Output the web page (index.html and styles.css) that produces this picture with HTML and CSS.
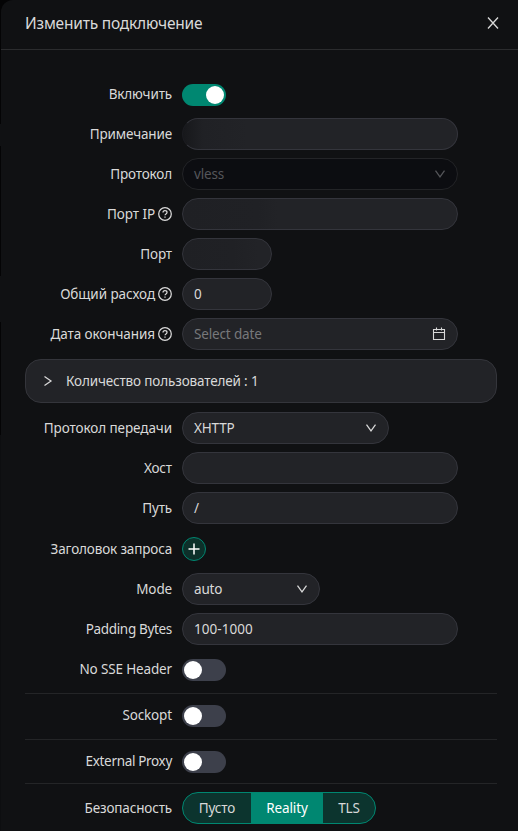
FILE: index.html
```html
<!DOCTYPE html>
<html lang="ru">
<head>
<meta charset="utf-8">
<title>Изменить подключение</title>
<link rel="stylesheet" href="styles.css">
</head>
<body>
<svg class="defs" width="0" height="0" aria-hidden="true">
  <symbol id="help" viewBox="0 0 14 14"><circle cx="7" cy="7" r="6.3"/><path d="M5 5.6C5 4.4 5.8 3.7 7 3.7s2 .7 2 1.8c0 1.5-2 1.4-2 2.8"/><path d="M7 9.5v1.2"/></symbol>
  <symbol id="down" viewBox="0 0 12 12"><path d="M1.5 2.7 6 8.9l4.500-6.200"/></symbol>
</svg>
<main class="modal">
  <header class="header">
    <h1 class="title">Изменить подключение</h1>
    <svg class="close" viewBox="0 0 12 12"><path d="M1 .5 11 11.500M11 .5 1 11.500"/></svg>
  </header>
  <div class="body">
    <div class="row"><label class="label">Включить</label><span class="switch on"></span></div>
    <div class="row"><label class="label">Примечание</label><div class="field hidden-note"></div></div>
    <div class="row"><label class="label">Протокол</label><div class="field disabled"><span>vless</span><svg class="arrow"><use href="#down"/></svg></div></div>
    <div class="row"><label class="label wide">Порт IP<svg class="help"><use href="#help"/></svg></label><div class="field hidden-ip"></div></div>
    <div class="row"><label class="label">Порт</label><div class="field short hidden-port"></div></div>
    <div class="row"><label class="label wide">Общий расход<svg class="help"><use href="#help"/></svg></label><div class="field short">0</div></div>
    <div class="row"><label class="label wide">Дата окончания<svg class="help"><use href="#help"/></svg></label><div class="field date"><span>Select date</span><svg class="calendar" viewBox="0 0 14 14"><path d="M1.500 2.500h11v10h-11zM1.500 5.500h11M4.500 .5v3M9.500 .5v3"/></svg></div></div>
    <div class="panel"><svg class="right" viewBox="0 0 12 12"><path d="m2.500 1.500 6.500 4.500-6.500 4.500"/></svg><span>Количество пользователей : 1</span></div>
    <div class="row"><label class="label wide">Протокол передачи</label><div class="field transport"><span>XHTTP</span><svg class="arrow"><use href="#down"/></svg></div></div>
    <div class="row"><label class="label">Хост</label><div class="field"></div></div>
    <div class="row"><label class="label">Путь</label><div class="field">/</div></div>
    <div class="row add-row"><label class="label">Заголовок запроса</label><span class="add"><svg viewBox="0 0 12 12"><path d="M6 .5v11M.5 6h11"/></svg></span></div>
    <div class="row"><label class="label">Mode</label><div class="field mode"><span>auto</span><svg class="arrow"><use href="#down"/></svg></div></div>
    <div class="row"><label class="label narrow">Padding Bytes</label><div class="field numbers">100-1000</div></div>
    <div class="row sse"><label class="label">No SSE Header</label><span class="switch"></span></div>
    <div class="row section"><label class="label">Sockopt</label><span class="switch"></span></div>
    <div class="row section proxy"><label class="label narrow">External Proxy</label><span class="switch"></span></div>
    <div class="row section security"><label class="label">Безопасность</label><div class="segments"><span class="none">Пусто</span><span class="reality">Reality</span><span class="tls">TLS</span></div></div>
  </div>
</main>
</body>
</html>
```
FILE: styles.css
```css
* { box-sizing: border-box; }
body {
  margin: 0;
  height: 831px;
  padding-left: 1px;
  overflow: hidden;
  background: linear-gradient(#040405 124px, #101113 124px 146px, #040405 146px 276px, #101113 276px 322px, #040405 322px 435px, #0d0e10 435px);
  color: #d9d9d9;
  font: 13.5px/20px "Noto Sans", "Open Sans", sans-serif;
  letter-spacing: -.15px;
}
svg { fill: none; stroke: currentColor; flex: none; }
.defs { position: absolute; }
.modal { height: 831px; background: #101113; border-top-left-radius: 12px; }
.header {
  height: 50px;
  padding: 0 19px 4px 24px;
  display: flex;
  align-items: center;
  justify-content: space-between;
  border-bottom: 1px solid #2b2c2e;
}
.title { margin: 0; font-size: 15.5px; line-height: 22px; font-weight: 400; letter-spacing: -.2px; }
.close { width: 12px; height: 12px; stroke-width: 1.3; }
.body { padding: 24px 21px 0 24px; }
.row { height: 40px; display: grid; grid-template-columns: 147px 1fr; column-gap: 10px; align-items: center; }
.label { display: flex; justify-content: flex-end; align-items: center; gap: 3px; white-space: nowrap; }
.wide { letter-spacing: -.08px; }
.narrow { letter-spacing: -.33px; }
.help { width: 14px; height: 14px; stroke-width: 1.25; }
.field {
  width: 276px;
  height: 32px;
  padding: 0 11px;
  display: flex;
  align-items: center;
  justify-content: space-between;
  background: #222327;
  border: 1px solid #34353c;
  border-radius: 16px;
}
.short { width: 90px; }
.transport { width: 207px; }
.mode { width: 138px; }
.numbers { letter-spacing: .05px; }
.disabled { background: #0c0d11; border-color: #232427; color: #55565a; }
.date span { color: #77787b; }
.arrow { width: 12px; height: 12px; stroke-width: 1.25; }
.calendar { width: 14px; height: 14px; stroke-width: 1.1; }
.hidden-note { background: linear-gradient(90deg, #17181b, #202125 20px, #222327 65px); border-left-color: #1b1c20; }
.hidden-ip { background: linear-gradient(90deg, #1f2024, #202125 75px, #222327 95px); }
.hidden-port { background: linear-gradient(90deg, #1f2024, #202125 50px, #222327 75px); }
.switch { width: 44px; height: 22px; padding: 2px; display: block; border-radius: 11px; background: #3d404b; margin-top: 2px; }
.switch::after { content: ""; display: block; width: 18px; height: 18px; border-radius: 50%; background: #fff; }
.switch.on { background: #008771; }
.switch.on::after { margin-left: auto; }
.panel {
  height: 44px;
  margin: 5px 0;
  padding: 0 16px;
  display: flex;
  align-items: center;
  gap: 12px;
  background: #222327;
  border: 1px solid #34353b;
  border-radius: 16px;
}
.right { width: 12px; height: 12px; stroke-width: 1.25; }
.add-row { height: 41px; }
.add { width: 24px; height: 24px; margin-top: 1px; display: grid; place-items: center; background: #0d302a; border: 1px solid #008771; border-radius: 50%; color: #fff; }
.add svg { width: 12px; height: 12px; stroke-width: 1.5; }
.sse { height: 44px; padding-bottom: 4px; }
.section { height: 46px; padding-bottom: 3px; border-top: 1px solid #242527; }
.proxy { height: 44px; padding-bottom: 1px; }
.security { height: 48px; padding: 1px 0 0; }
.segments { width: 194px; height: 32px; display: flex; overflow: hidden; border: 1px solid #008771; border-radius: 16px; background: #0c342e; line-height: 30px; text-align: center; }
.none { width: 68px; }
.reality { width: 72px; background: #008771; color: #fff; }
.tls { width: 52px; }
```
